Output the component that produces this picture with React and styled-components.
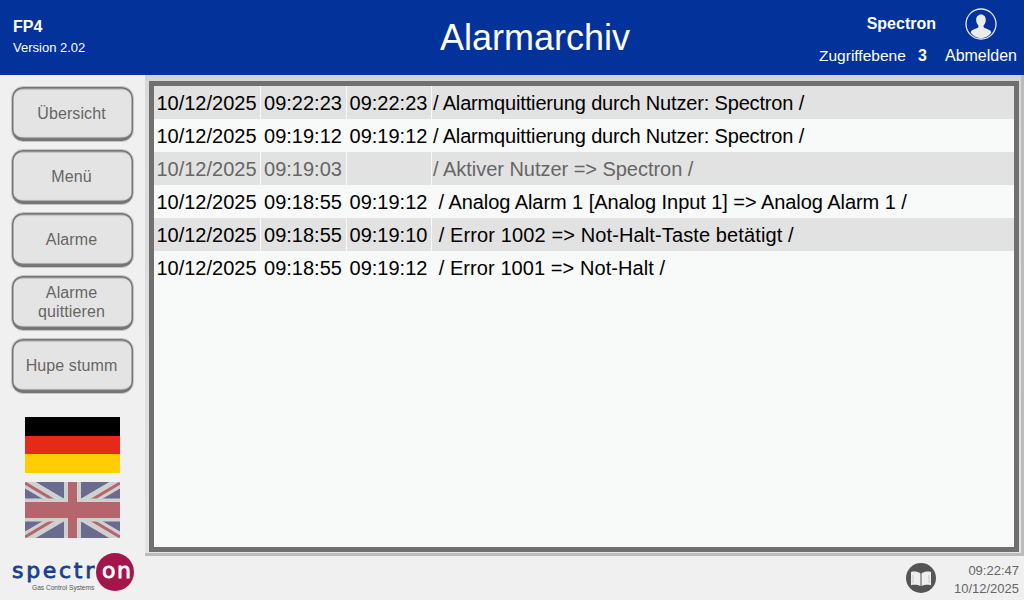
import React from "react";
import styled, { createGlobalStyle } from "styled-components";

const rows = [
  { date: "10/12/2025", come: "09:22:23", go: "09:22:23", text: "/ Alarmquittierung durch Nutzer: Spectron /", track: -0.16 },
  { date: "10/12/2025", come: "09:19:12", go: "09:19:12", text: "/ Alarmquittierung durch Nutzer: Spectron /", track: -0.16 },
  { date: "10/12/2025", come: "09:19:03", go: "", text: "/ Aktiver Nutzer => Spectron /", track: -0.03, muted: true },
  { date: "10/12/2025", come: "09:18:55", go: "09:19:12", text: " / Analog Alarm 1 [Analog Input 1] => Analog Alarm 1 /", track: -0.06 },
  { date: "10/12/2025", come: "09:18:55", go: "09:19:10", text: " / Error 1002 => Not-Halt-Taste betätigt /", track: 0.12 },
  { date: "10/12/2025", come: "09:18:55", go: "09:19:12", text: " / Error 1001 => Not-Halt /", track: 0.08 },
];

const buttons = ["Übersicht", "Menü", "Alarme", "Alarme quittieren", "Hupe stumm"];

const App = () => {
  return (
    <>
      <GlobalStyle />
      <Page>
        <Header>
          <Version>
            <strong>FP4</strong>
            <span>Version 2.02</span>
          </Version>
          <Title>Alarmarchiv</Title>
          <UserBox>
            <UserName>Spectron</UserName>
            <Avatar>
              <svg width="32" height="32" viewBox="0 0 32 32">
                <circle cx="16" cy="16" r="15" fill="none" stroke="#e8e8e8" strokeWidth="1.3" />
                <path
                  d="M16 6.5c3 0 4.8 2.4 4.8 5.4 0 2.4-1 4.3-2.2 5.4v1.6c0 1 3.8 1.7 6 3.2 1 .7 1.4 1.6 1.6 2.6A14.2 14.2 0 0 1 16 30.2 14.2 14.2 0 0 1 5.8 24.7c.2-1 .6-1.9 1.6-2.6 2.2-1.5 6-2.2 6-3.2v-1.6c-1.2-1.1-2.2-3-2.2-5.4 0-3 1.8-5.4 4.8-5.4z"
                  fill="#ececec"
                />
              </svg>
            </Avatar>
            <Level>
              Zugriffebene <b>3</b>
            </Level>
            <Logout>Abmelden</Logout>
          </UserBox>
        </Header>
        <Body>
          <Sidebar>
            {buttons.map((label) => (
              <NavButton key={label}>{label}</NavButton>
            ))}
            <GermanFlag viewBox="0 0 95 56">
              <rect width="95" height="19" fill="#000" />
              <rect y="19" width="95" height="18" fill="#e52b17" />
              <rect y="37" width="95" height="19" fill="#ffce00" />
            </GermanFlag>
            <BritishFlag viewBox="0 0 95 56">
              <rect width="95" height="56" fill="#6b6b90" />
              <path d="M0 0L95 56M95 0L0 56" stroke="#d0d0d0" strokeWidth="11" />
              <path d="M0 1L47 29M95 55L48 27M95 1L48 29M0 55L47 27" stroke="#b5666c" strokeWidth="3" />
              <path d="M47.5 0V56" stroke="#d0d0d0" strokeWidth="17" />
              <path d="M0 28H95" stroke="#d0d0d0" strokeWidth="23" />
              <path d="M47.5 0V56" stroke="#b5666c" strokeWidth="9" />
              <path d="M0 28H95" stroke="#b5666c" strokeWidth="16" />
            </BritishFlag>
            <Logo>
              <LogoWord>spectr</LogoWord>
              <LogoBadge>on</LogoBadge>
              <LogoTag>Gas Control Systems</LogoTag>
            </Logo>
          </Sidebar>
          <Main>
            <Panel>
              <Frame>
                {rows.map((row, i) => (
                  <Row key={i} $even={i % 2 === 0} $muted={row.muted}>
                    <Cell>{row.date}</Cell>
                    <Cell>{row.come}</Cell>
                    <Cell>{row.go}</Cell>
                    <TextCell $track={row.track}>{row.text}</TextCell>
                  </Row>
                ))}
              </Frame>
            </Panel>
            <Footer>
              <BookIcon>
                <svg width="30" height="30" viewBox="0 0 30 30">
                  <circle cx="15" cy="15" r="15" fill="#555" />
                  <path d="M5 9c3-1 7-.5 9.5 1.5V23c-2.5-1.2-6.5-1.5-9.5-.8z" fill="#efefef" />
                  <path d="M25 9c-3-1-7-.5-9.5 1.5V23c2.5-1.2 6.5-1.5 9.500-.8z" fill="#efefef" />
                  <path d="M7 12v8M23 12v8" stroke="#d4d4d4" strokeWidth="1.5" />
                </svg>
              </BookIcon>
              <Clock>
                <span>09:22:47</span>
                <span>10/12/2025</span>
              </Clock>
            </Footer>
          </Main>
        </Body>
      </Page>
    </>
  );
};

const GlobalStyle = createGlobalStyle`
  html, body {
    margin: 0;
    padding: 0;
    background: #f0f0f0;
    font-family: "Liberation Sans", Arial, sans-serif;
  }
`;

const Page = styled.div`
  width: 1024px;
  height: 600px;
  overflow: hidden;
  display: flex;
  flex-direction: column;
`;

const Header = styled.header`
  height: 75px;
  flex: none;
  background: #03339a;
  color: #fff;
  display: grid;
  grid-template-columns: 440px auto 1fr;
  align-items: center;
`;

const Version = styled.div`
  align-self: start;
  padding: 18px 0 0 13px;
  display: flex;
  flex-direction: column;
  gap: 4px;
  strong {
    font-size: 16px;
  }
  span {
    font-size: 13px;
  }
`;

const Title = styled.h1`
  margin: 0;
  padding-top: 1px;
  font-size: 36px;
  font-weight: normal;
`;

const UserBox = styled.div`
  justify-self: end;
  align-self: start;
  padding: 8px 7px 0 0;
  display: grid;
  grid-template-columns: auto 81px;
  grid-template-rows: 32px 24px;
  row-gap: 4px;
  align-items: center;
  justify-items: end;
`;

const UserName = styled.div`
  font-size: 16px;
  font-weight: bold;
  margin-top: -1px;
`;

const Avatar = styled.div`
  height: 32px;
  margin-right: 20px;
`;

const Level = styled.div`
  font-size: 15.5px;
  padding-right: 9px;
  b {
    margin-left: 8px;
    font-size: 16px;
  }
`;

const Logout = styled.div`
  font-size: 16px;
`;

const Body = styled.div`
  flex: 1;
  display: flex;
  min-height: 0;
`;

const Sidebar = styled.nav`
  width: 145px;
  flex: none;
  padding: 11px 0 0 11px;
  box-sizing: border-box;
  display: flex;
  flex-direction: column;
  gap: 7px;
`;

const NavButton = styled.button`
  width: 123px;
  height: 56px;
  flex: none;
  padding: 0 6px 2px 4px;
  box-sizing: border-box;
  border: 1px solid #c4c4c4;
  border-radius: 12px;
  background: #e4e4e4;
  box-shadow: inset 0 0 0 1.5px #767676, inset 0 -3.5px 1px #747474, inset 0 2.5px 1px #a8a8a8;
  color: #666;
  font: 16px/19px "Liberation Sans", Arial, sans-serif;
  letter-spacing: 0.1px;
`;

const GermanFlag = styled.svg`
  width: 95px;
  height: 56px;
  flex: none;
  margin: 16px 0 0 14px;
`;

const BritishFlag = styled.svg`
  width: 95px;
  height: 56px;
  flex: none;
  margin: 2px 0 0 14px;
`;

const Logo = styled.div`
  position: relative;
  width: 123px;
  height: 38px;
  margin-top: 8px;
  flex: none;
  display: flex;
  font: 22px/36px "DejaVu Sans", sans-serif;
  -webkit-text-stroke: 0.8px currentColor;
`;

const LogoWord = styled.span`
  width: 85px;
  padding-left: 1px;
  box-sizing: border-box;
  flex: none;
  letter-spacing: 2.7px;
  color: #1a3f8f;
`;

const LogoBadge = styled.span`
  width: 38px;
  height: 38px;
  flex: none;
  box-sizing: border-box;
  padding-left: 6px;
  border-radius: 50%;
  background: #a3164c;
  color: #fff;
  letter-spacing: 1.5px;
`;

const LogoTag = styled.span`
  position: absolute;
  left: 21px;
  top: 31px;
  font: 6.6px/8px "Liberation Sans", Arial, sans-serif;
  -webkit-text-stroke: 0;
  color: #555;
  white-space: nowrap;
`;

const Main = styled.main`
  flex: 1;
  min-width: 0;
  display: flex;
  flex-direction: column;
`;

const Panel = styled.div`
  height: 481px;
  flex: none;
  box-sizing: border-box;
  padding: 6px 5px 4px 4px;
  background: linear-gradient(#d2d2d2, #d9d9d9 2%, #e4e4e4);
  box-shadow: inset -3px -3px 0 #bcbcbc;
`;

const Frame = styled.div`
  height: 100%;
  box-sizing: border-box;
  border: 5px solid #707070;
  background: #f8f9f9;
`;

const Row = styled.div`
  height: 33px;
  display: grid;
  grid-template-columns: 106px 85px 84px 1fr;
  column-gap: 1px;
  background: ${(props) => (props.$even ? "#e2e2e2" : "#f8f9f9")};
  color: ${(props) => (props.$muted ? "#666" : "#000")};
  font-size: 20px;
  line-height: 34px;
`;

const Cell = styled.div`
  padding-right: 1px;
  text-align: center;
  white-space: nowrap;
  box-shadow: 1px 0 0 #f8f9f9;
`;

const TextCell = styled.div`
  padding-left: 1px;
  white-space: pre;
  letter-spacing: ${(props) => props.$track}px;
`;

const Footer = styled.div`
  flex: 1;
  display: flex;
  justify-content: flex-end;
  align-items: center;
  padding-right: 5px;
  gap: 18px;
`;

const BookIcon = styled.div`
  height: 30px;
`;

const Clock = styled.div`
  margin-top: 2px;
  display: flex;
  flex-direction: column;
  align-items: flex-end;
  gap: 3px;
  font-size: 13px;
  line-height: 15px;
  color: #666;
`;

export default App;
